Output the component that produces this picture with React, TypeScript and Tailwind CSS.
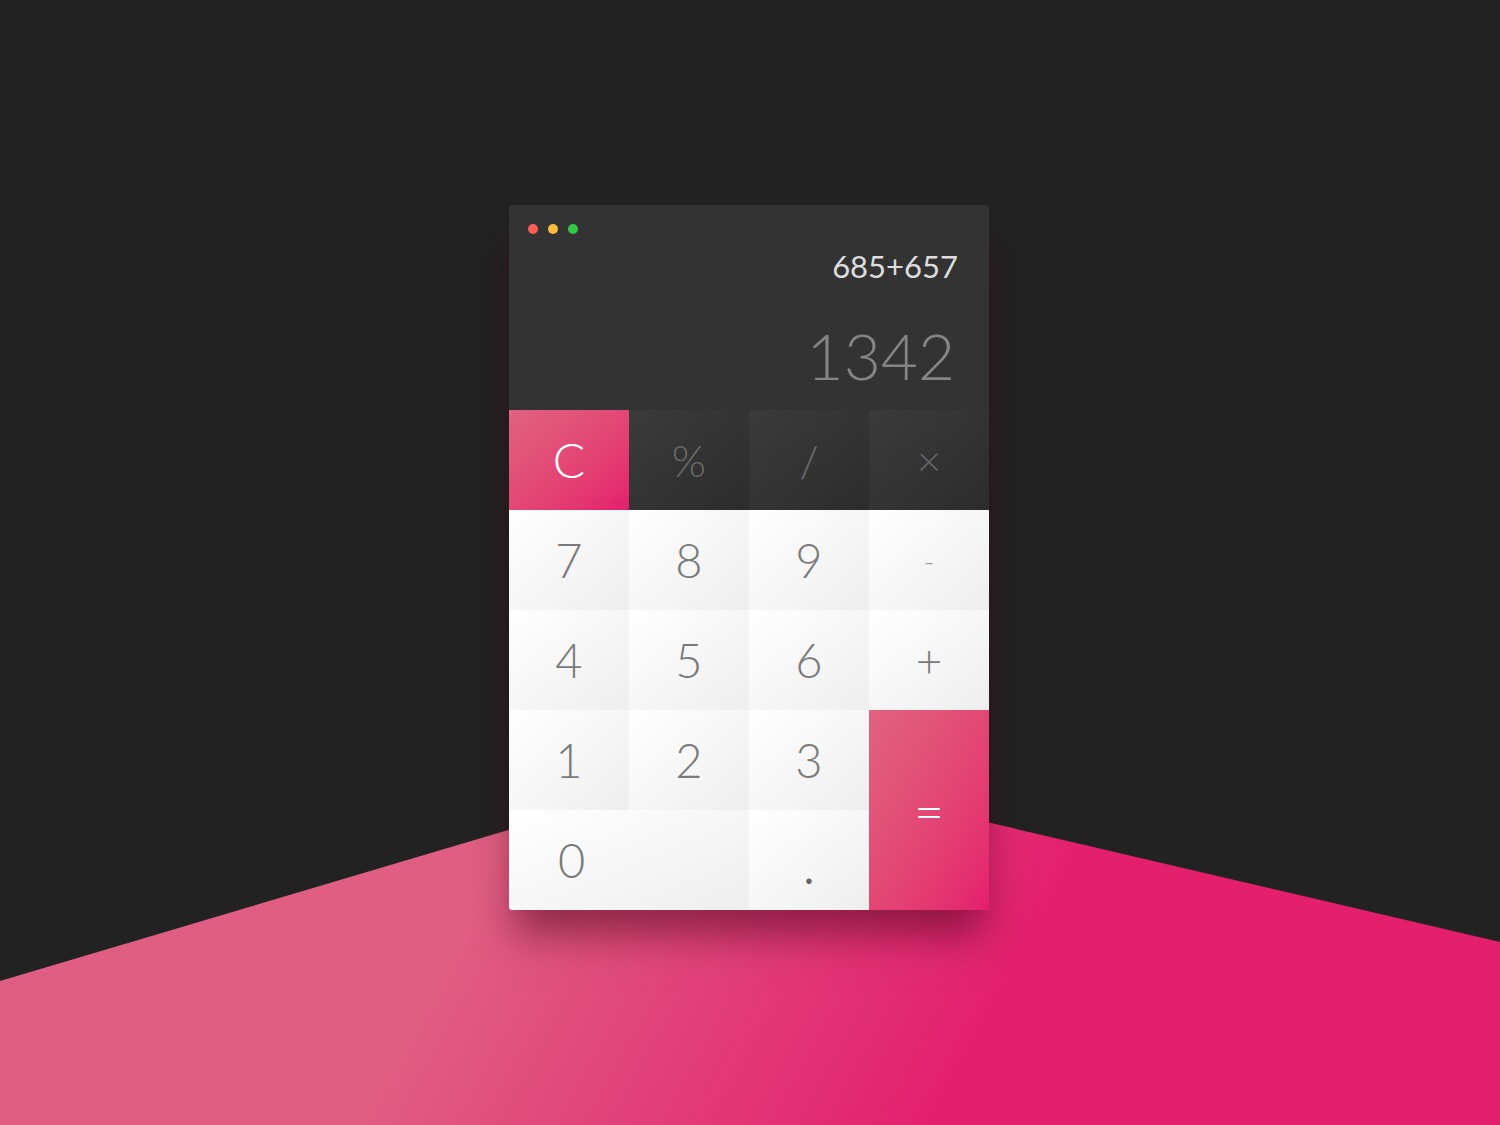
import React from "react";

const font = { fontFamily: '"Lato", "Inter", "Liberation Sans", sans-serif' };

type Key = {
  label: string;
  kind: "pink" | "dark" | "light";
  className?: string;
  textClass?: string;
};

const keys: Key[] = [
  { label: "C", kind: "pink", textClass: "text-[48px] text-white" },
  { label: "%", kind: "dark", textClass: "text-[44px] text-[#6c6c6c]" },
  { label: "/", kind: "dark", textClass: "text-[44px] text-[#6c6c6c]" },
  { label: "×", kind: "dark", textClass: "text-[42px] text-[#666666]" },
  { label: "7", kind: "light" },
  { label: "8", kind: "light" },
  { label: "9", kind: "light" },
  { label: "-", kind: "light", textClass: "text-[30px] text-[#999]" },
  { label: "4", kind: "light" },
  { label: "5", kind: "light" },
  { label: "6", kind: "light" },
  { label: "+", kind: "light", textClass: "text-[46px] text-[#7a7a7a]" },
  { label: "1", kind: "light" },
  { label: "2", kind: "light" },
  { label: "3", kind: "light" },
  { label: "=", kind: "pink", className: "row-span-2", textClass: "text-[52px] text-white" },
  { label: "0", kind: "light", className: "col-span-2 !justify-start pl-[49px]" },
  { label: ".", kind: "light", textClass: "text-[44px] text-[#666] pt-[14px] font-normal" },
];

const bgFor = {
  pink: "bg-linear-to-br from-[#e0627f] to-[#e51d6c]",
  dark: "bg-linear-to-br from-[#3b3b3b] to-[#2c2c2c]",
  light: "bg-linear-to-br from-[#ffffff] to-[#eeeeee]",
};

const CalcKey = ({ k }: { k: Key }) => (
  <button
    className={`flex items-center justify-center font-light leading-none ${bgFor[k.kind]} ${k.className ?? ""}`}
    style={font}
  >
    <span className={k.textClass ?? "text-[47px] text-[#7a7a7a]"}>{k.label}</span>
  </button>
);

const Backdrop = () => (
  <svg className="absolute inset-0" width="1500" height="1125" viewBox="0 0 1500 1125">
    <defs>
      <linearGradient id="floor" x1="500" y1="850" x2="950" y2="1100" gradientUnits="userSpaceOnUse">
        <stop offset="0" stopColor="#e05e84" />
        <stop offset="1" stopColor="#e41f6c" />
      </linearGradient>
    </defs>
    <polygon points="0,981 734,763 1500,942 1500,1125 0,1125" fill="url(#floor)" />
  </svg>
);

export default function App() {
  return (
    <div className="relative w-[1500px] h-[1125px] overflow-hidden bg-[#222222]">
      <Backdrop />
      <div className="relative pt-[205px] pl-[509px]">
        <div className="w-[480px] rounded-[3px] overflow-hidden shadow-[0_30px_38px_-6px_rgba(60,0,20,0.5)]">
          <div className="h-[205px] bg-[#333333] flex flex-col px-[19px] pt-[19px]" style={font}>
            <div className="flex gap-[10px]">
              <span className="w-[10px] h-[10px] rounded-full bg-[#fc5f57]" />
              <span className="w-[10px] h-[10px] rounded-full bg-[#fdbb3b]" />
              <span className="w-[10px] h-[10px] rounded-full bg-[#33c748]" />
            </div>
            <div className="text-right pr-[12px] mt-[17px] text-[31px] leading-none text-[#dddddd]">
              685+657
            </div>
            <div className="text-right pr-[15px] mt-[42px] text-[64px] leading-none font-light text-[#858585]">
              1342
            </div>
          </div>
          <div className="grid grid-cols-[repeat(4,120px)] grid-rows-[repeat(5,100px)]">
            {keys.map((k) => (
              <CalcKey key={k.label} k={k} />
            ))}
          </div>
        </div>
      </div>
    </div>
  );
}
